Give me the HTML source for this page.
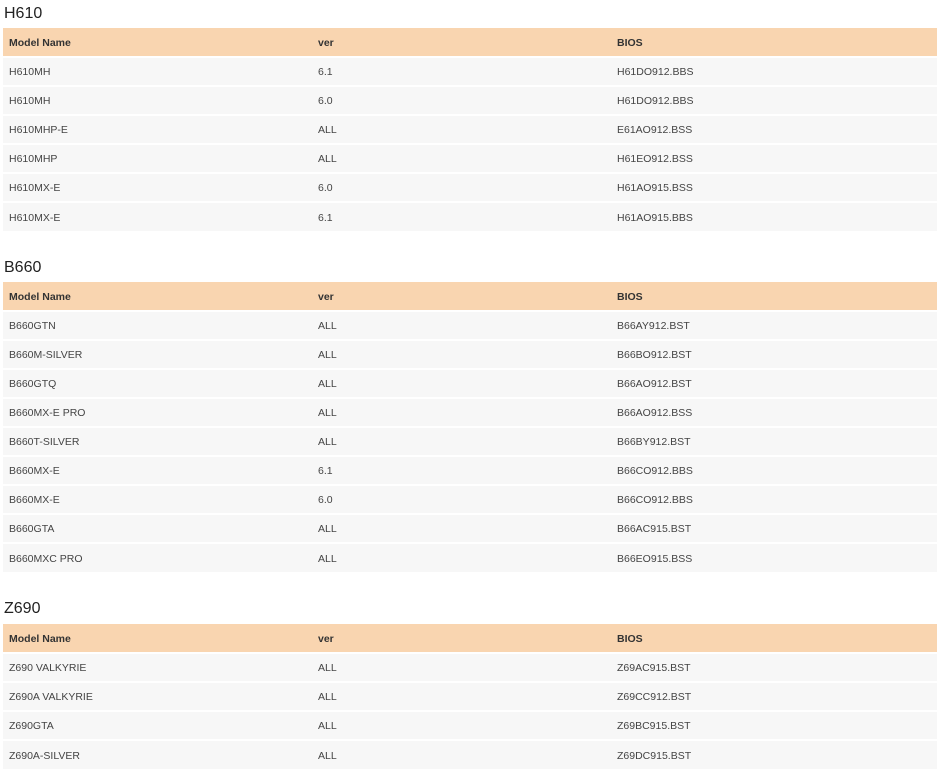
<!DOCTYPE html>
<html><head><meta charset="utf-8"><style>
body{margin:0;background:#fff;font-family:"Liberation Sans",Arial,sans-serif;}
h3{position:absolute;left:4px;margin:0;font-size:16px;font-weight:normal;color:#222;line-height:18px;}
table{position:absolute;left:3px;width:934px;border-collapse:collapse;table-layout:fixed;font-size:10.5px;color:#444;}
td,th{height:29px;padding:1px 0 0 6px;text-align:left;box-sizing:border-box;}
th{background:#f9d5b0;font-weight:bold;color:#333;height:29px;}
tr.r td{background:#f7f7f7;border-top:2px solid #fff;}
col.a{width:309px}col.b{width:299px}
</style></head><body>
<h3 style="top:5px">H610</h3>
<table style="top:28px"><col class="a"><col class="b"><col>
<tr><th>Model Name</th><th>ver</th><th>BIOS</th></tr>
<tr class="r"><td>H610MH</td><td>6.1</td><td>H61DO912.BBS</td></tr>
<tr class="r"><td>H610MH</td><td>6.0</td><td>H61DO912.BBS</td></tr>
<tr class="r"><td>H610MHP-E</td><td>ALL</td><td>E61AO912.BSS</td></tr>
<tr class="r"><td>H610MHP</td><td>ALL</td><td>H61EO912.BSS</td></tr>
<tr class="r"><td>H610MX-E</td><td>6.0</td><td>H61AO915.BSS</td></tr>
<tr class="r"><td>H610MX-E</td><td>6.1</td><td>H61AO915.BBS</td></tr>
</table>
<h3 style="top:259px">B660</h3>
<table style="top:282px"><col class="a"><col class="b"><col>
<tr><th>Model Name</th><th>ver</th><th>BIOS</th></tr>
<tr class="r"><td>B660GTN</td><td>ALL</td><td>B66AY912.BST</td></tr>
<tr class="r"><td>B660M-SILVER</td><td>ALL</td><td>B66BO912.BST</td></tr>
<tr class="r"><td>B660GTQ</td><td>ALL</td><td>B66AO912.BST</td></tr>
<tr class="r"><td>B660MX-E PRO</td><td>ALL</td><td>B66AO912.BSS</td></tr>
<tr class="r"><td>B660T-SILVER</td><td>ALL</td><td>B66BY912.BST</td></tr>
<tr class="r"><td>B660MX-E</td><td>6.1</td><td>B66CO912.BBS</td></tr>
<tr class="r"><td>B660MX-E</td><td>6.0</td><td>B66CO912.BBS</td></tr>
<tr class="r"><td>B660GTA</td><td>ALL</td><td>B66AC915.BST</td></tr>
<tr class="r"><td>B660MXC PRO</td><td>ALL</td><td>B66EO915.BSS</td></tr>
</table>
<h3 style="top:600px">Z690</h3>
<table style="top:624px"><col class="a"><col class="b"><col>
<tr><th>Model Name</th><th>ver</th><th>BIOS</th></tr>
<tr class="r"><td>Z690 VALKYRIE</td><td>ALL</td><td>Z69AC915.BST</td></tr>
<tr class="r"><td>Z690A VALKYRIE</td><td>ALL</td><td>Z69CC912.BST</td></tr>
<tr class="r"><td>Z690GTA</td><td>ALL</td><td>Z69BC915.BST</td></tr>
<tr class="r"><td>Z690A-SILVER</td><td>ALL</td><td>Z69DC915.BST</td></tr>
</table>
</body></html>
